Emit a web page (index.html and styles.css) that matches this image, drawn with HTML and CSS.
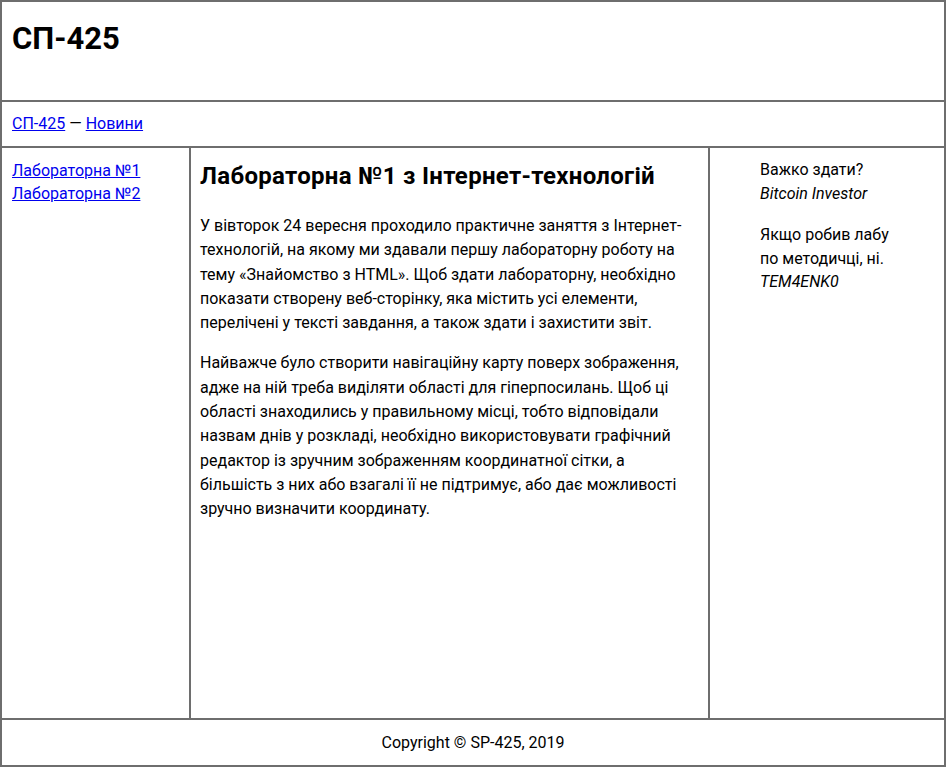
FILE: index.html
```html
<!DOCTYPE html>
<html lang="uk">
<head>
<meta charset="utf-8">
<title>СП-425</title>
<link rel="stylesheet" href="styles.css">
</head>
<body>
<div class="page">
  <header class="site-header">
    <h1 class="site-title">СП-425</h1>
  </header>
  <nav class="crumbs">
    <a href="#">СП-425</a> — <a href="#">Новини</a>
  </nav>
  <aside class="menu">
    <a href="#">Лабораторна №1</a><br>
    <a href="#">Лабораторна №2</a>
  </aside>
  <main class="content">
    <h2 class="content-title">Лабораторна №1 з Інтернет-технологій</h2>
    <p>У вівторок 24 вересня проходило практичне заняття з Інтернет-технологій, на якому ми здавали першу лабораторну роботу на тему «Знайомство з HTML». Щоб здати лабораторну, необхідно показати створену веб-сторінку, яка містить усі елементи, перелічені у тексті завдання, а також здати і захистити звіт.</p>
    <p>Найважче було створити навігаційну карту поверх зображення, адже на ній треба виділяти області для гіперпосилань. Щоб ці області знаходились у правильному місці, тобто відповідали назвам днів у розкладі, необхідно використовувати графічний редактор із зручним зображенням координатної сітки, а більшість з них або взагалі її не підтримує, або дає можливості зручно визначити координату.</p>
  </main>
  <aside class="quotes">
    <p>Важко здати?<br><i>Bitcoin Investor</i></p>
    <p>Якщо робив лабу по методичці, ні.<br><i>TEM4ENK0</i></p>
  </aside>
  <footer class="site-footer">Copyright © SP-425, 2019</footer>
</div>
</body>
</html>
```
FILE: styles.css
```css
html, body {
  margin: 0;
  padding: 0;
  background: #fff;
}
body {
  font-family: Roboto, "Noto Sans", sans-serif;
  font-size: 16px;
  color: #000;
}
* { box-sizing: border-box; }

.page {
  width: 946px;
  height: 767px;
  border: 2px solid #6e6e6e;
  display: grid;
  grid-template-columns: 189px 519px 1fr;
  grid-template-rows: 100px 46px 1fr 47px;
  grid-template-areas:
    "head head head"
    "nav nav nav"
    "menu main side"
    "foot foot foot";
}

.site-header {
  grid-area: head;
  border-bottom: 2px solid #6e6e6e;
  padding: 18px 10px 0;
}
.site-title {
  margin: 0;
  font-size: 31px;
  line-height: 38px;
  font-weight: 700;
}

.crumbs {
  grid-area: nav;
  border-bottom: 2px solid #6e6e6e;
  padding: 10px 10px;
  line-height: 24px;
}

a { color: #0000ee; text-decoration: underline; }

.menu {
  grid-area: menu;
  border-right: 2px solid #6e6e6e;
  padding: 11px 10px 10px;
  line-height: 23px;
}

.content {
  grid-area: main;
  border-right: 2px solid #6e6e6e;
  padding: 10px 9px 10px 9px;
}
.content-title {
  margin: 4px 0 24px;
  font-size: 24px;
  line-height: 28px;
  font-weight: 700;
  letter-spacing: 0.3px;
}
.content p {
  margin: 16px 0;
  line-height: 24.3px;
}
.content-title + p { margin-top: 0; }

.quotes {
  grid-area: side;
  padding: 10px 50px;
  line-height: 23.5px;
}
.quotes p { margin: 0 0 18px; }

.site-footer {
  grid-area: foot;
  border-top: 2px solid #6e6e6e;
  text-align: center;
  line-height: 45px;
}
```
